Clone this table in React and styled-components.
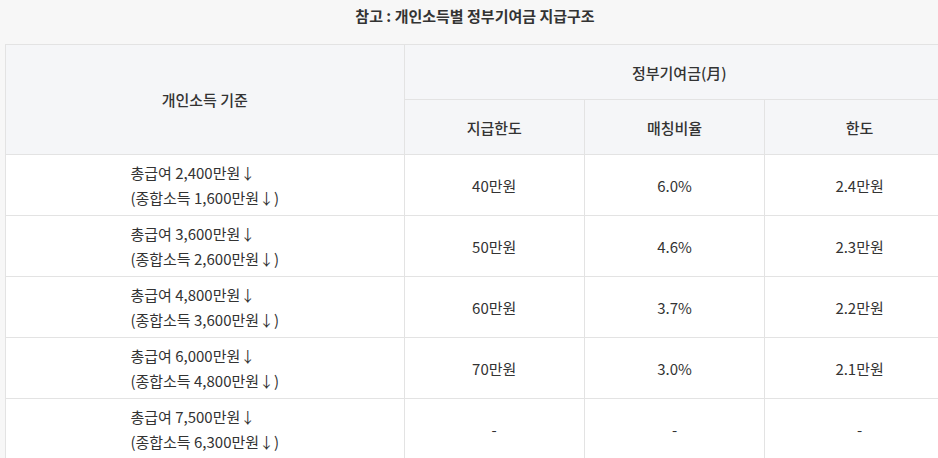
import React from "react";
import styled, { createGlobalStyle } from "styled-components";

const rows = [
  { pay: "2,400", income: "1,600", limit: "40만원", rate: "6.0%", max: "2.4만원" },
  { pay: "3,600", income: "2,600", limit: "50만원", rate: "4.6%", max: "2.3만원" },
  { pay: "4,800", income: "3,600", limit: "60만원", rate: "3.7%", max: "2.2만원" },
  { pay: "6,000", income: "4,800", limit: "70만원", rate: "3.0%", max: "2.1만원" },
  { pay: "7,500", income: "6,300", limit: "-", rate: "-", max: "-" },
];

export default function App() {
  return (
    <>
      <GlobalStyle />
      <Wrapper>
        <Title>참고 : 개인소득별 정부기여금 지급구조</Title>
        <Table>
          <colgroup>
            <col style={{ width: "42%" }} />
            <col style={{ width: "19%" }} />
            <col style={{ width: "19%" }} />
            <col style={{ width: "20%" }} />
          </colgroup>
          <thead>
            <tr>
              <Th rowSpan={2}>개인소득 기준</Th>
              <Th colSpan={3}>정부기여금(月)</Th>
            </tr>
            <tr>
              <Th>지급한도</Th>
              <Th>매칭비율</Th>
              <Th>한도</Th>
            </tr>
          </thead>
          <tbody>
            {rows.map((r) => (
              <tr key={r.pay}>
                <Td>
                  <Criteria>
                    총급여 {r.pay}만원↓
                    <br />
                    (종합소득 {r.income}만원↓)
                  </Criteria>
                </Td>
                <Td>{r.limit}</Td>
                <Td>{r.rate}</Td>
                <Td>{r.max}</Td>
              </tr>
            ))}
          </tbody>
        </Table>
      </Wrapper>
    </>
  );
}

const GlobalStyle = createGlobalStyle`
  html, body {
    margin: 0;
    background: #f7f7f7;
    overflow: hidden;
  }
  body {
    font-family: "Noto Sans CJK KR", "Noto Sans", sans-serif;
    color: #333;
  }
`;

const Wrapper = styled.div`
  width: 960px;
  padding-top: 5px;
`;

const Title = styled.h2`
  width: 950px;
  margin: 0;
  height: 39px;
  text-align: center;
  font-size: 15px;
  font-weight: 700;
  line-height: 22px;
  color: #333;
`;

const Table = styled.table`
  width: 950px;
  margin-left: 5px;
  border-collapse: collapse;
  table-layout: fixed;
  border-top: 1px solid #e3e3e3;
  border-left: 1px solid #e3e3e3;
`;

const Th = styled.th`
  height: 54px;
  padding: 0;
  background: #f5f6f8;
  border: 1px solid #e3e3e3;
  font-size: 15px;
  font-weight: 500;
  color: #333;
  text-align: center;
  vertical-align: middle;
`;

const Td = styled.td`
  height: 60px;
  padding: 0;
  background: #fff;
  border: 1px solid #e3e3e3;
  font-size: 15px;
  color: #333;
  text-align: center;
  vertical-align: middle;
  line-height: 25px;
`;

const Criteria = styled.div`
  display: inline-block;
  text-align: left;
`;
